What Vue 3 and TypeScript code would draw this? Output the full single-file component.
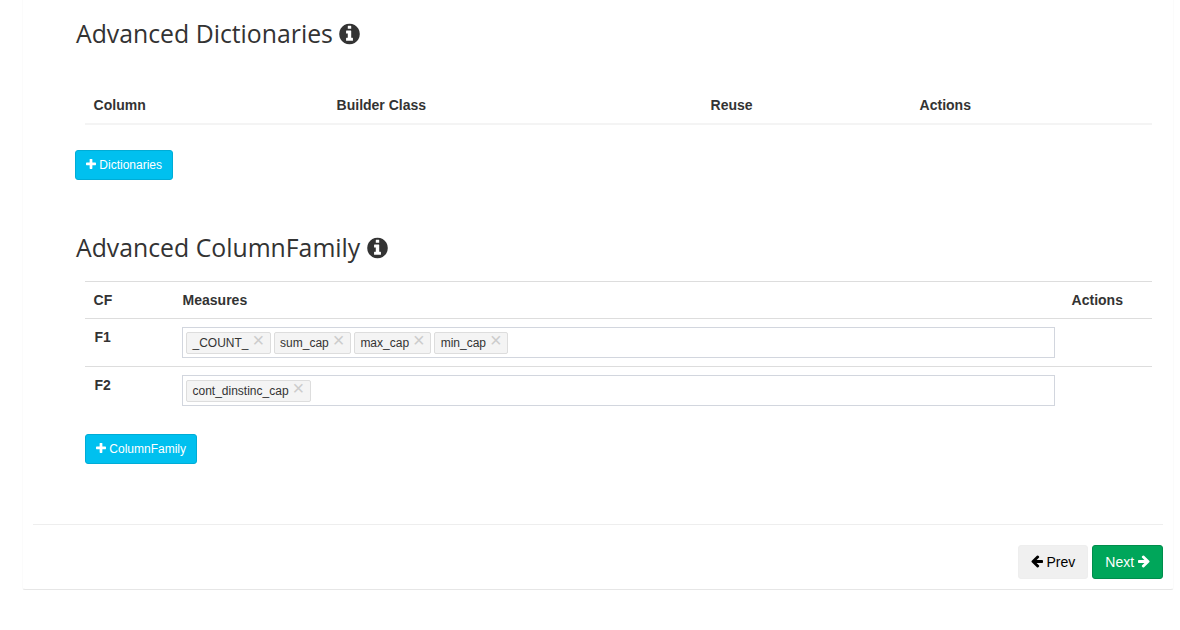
<script setup lang="ts">
interface Row { name: string; tags: string[] }
const rows: Row[] = [
  { name: 'F1', tags: ['_COUNT_', 'sum_cap', 'max_cap', 'min_cap'] },
  { name: 'F2', tags: ['cont_dinstinc_cap'] },
]
const info = 'M1024 1376v-160q0-14-9-23t-23-9h-96v-512q0-14-9-23t-23-9h-320q-14 0-23 9t-9 23v160q0 14 9 23t23 9h96v320h-96q-14 0-23 9t-9 23v160q0 14 9 23t23 9h448q14 0 23-9t9-23zm-128-896v-160q0-14-9-23t-23-9h-192q-14 0-23 9t-9 23v160q0 14 9 23t23 9h192q14 0 23-9t9-23zm640 416q0 209-103 385.5t-279.5 279.5-385.5 103-385.5-103-279.5-279.5-103-385.5 103-385.5 279.5-279.5 385.5-103 385.5 103 279.5 279.5 103 385.5z'
const plus = 'M1408 736v192q0 40-28 68t-68 28h-416v416q0 40-28 68t-68 28h-192q-40 0-68-28t-28-68v-416h-416q-40 0-68-28t-28-68v-192q0-40 28-68t68-28h416v-416q0-40 28-68t68-28h192q40 0 68 28t28 68v416h416q40 0 68 28t28 68z'
const left = 'M1536 768v128q0 53-32.5 90.5t-84.5 37.5h-704l293 294q38 36 38 90t-38 90l-75 76q-37 37-90 37-52 0-91-37l-651-652q-37-37-37-90 0-52 37-91l651-650q38-38 91-38 52 0 90 38l75 74q38 38 38 91t-38 91l-293 293h704q52 0 84.5 37.5t32.5 90.5z'
const right = 'M1472 832q0 54-37 91l-651 651q-39 37-91 37-51 0-90-37l-75-75q-38-38-38-91t38-91l293-293h-704q-52 0-84.5-37.5t-32.5-90.5v-128q0-53 32.5-90.5t84.5-37.5h704l-293-294q-38-36-38-90t38-90l75-75q38-38 90-38 53 0 91 38l651 651q37 35 37 90z'
</script>

<template>
  <div class="page">
    <div class="card">
      <section class="dict">
        <h3 class="title">Advanced Dictionaries
          <svg class="info" viewBox="0 0 1536 1792"><path :d="info" /></svg>
        </h3>
        <table class="t1">
          <thead>
            <tr>
              <th style="width: 243px">Column</th>
              <th style="width: 374px">Builder Class</th>
              <th style="width: 209px">Reuse</th>
              <th>Actions</th>
            </tr>
          </thead>
        </table>
        <button class="btn info-btn sm">
          <svg class="ic" viewBox="0 0 1408 1792"><path :d="plus" /></svg> Dictionaries
        </button>
      </section>

      <section class="family">
        <h3 class="title">Advanced ColumnFamily
          <svg class="info" viewBox="0 0 1536 1792"><path :d="info" /></svg>
        </h3>
        <div class="indent">
          <table class="t2">
            <thead>
              <tr>
                <th style="width: 89px">CF</th>
                <th style="width: 889px">Measures</th>
                <th>Actions</th>
              </tr>
            </thead>
            <tbody>
              <tr v-for="r in rows" :key="r.name">
                <td class="name">{{ r.name }}</td>
                <td>
                  <div class="tagbox">
                    <span v-for="t in r.tags" :key="t" class="tag">{{ t }}<i class="x">×</i></span>
                  </div>
                </td>
                <td></td>
              </tr>
            </tbody>
          </table>
          <button class="btn info-btn sm">
            <svg class="ic" viewBox="0 0 1408 1792"><path :d="plus" /></svg> ColumnFamily
          </button>
        </div>
      </section>

      <footer class="foot">
        <button class="btn prev">
          <svg class="ic" viewBox="0 0 1536 1792"><path :d="left" /></svg> Prev
        </button>
        <button class="btn next">
          Next <svg class="ic" viewBox="0 0 1536 1792"><path :d="right" /></svg>
        </button>
      </footer>
    </div>
  </div>
</template>

<style>
html, body { background: #fff; }
</style>

<style scoped>
.page {
  width: 1152px;
  padding-left: 22px;
  font-family: "Liberation Sans", Arial, sans-serif;
  font-size: 14px;
  color: #333;
}
.card {
  box-sizing: border-box;
  height: 590px;
  padding: 20px 10px 0;
  background: #fff;
  border: 1px solid #fbfbfb;
  border-top: 0;
  border-bottom-color: #e6e6e6;
  border-radius: 0 0 3px 3px;
}
.dict, .family { padding-left: 42px; }
.title {
  margin: 0;
  padding-left: 1px;
  font-family: "Open Sans", sans-serif;
  font-size: 24.8px;
  font-weight: 400;
  line-height: 27px;
  color: #333;
}
.info { width: 21px; height: 24px; fill: #333; vertical-align: -3px; margin-left: 0; }
table { border-collapse: collapse; border-spacing: 0; table-layout: fixed; width: 1067px; margin-left: 10px; }
th { box-sizing: border-box; text-align: left; font-weight: 700; padding: 8px 8px 8px 8.6px; line-height: 20px; }
.t1 { margin-top: 40px; }
.t1 th { border-bottom: 2px solid #f4f4f4; }
.t2 { margin-top: 20px; margin-left: 0; }
.t2 th { border-top: 1px solid #ddd; border-bottom: 1px solid #ddd; }
.t2 td { padding: 8px; border-bottom: 1px solid #ddd; vertical-align: top; line-height: 20px; }
.t2 tbody tr:last-child td { border-bottom: 0; }
.t2 td.name { font-weight: 700; padding-left: 9.5px; }
.indent { padding-left: 10px; }
.tagbox {
  box-sizing: border-box;
  display: flex;
  gap: 3px;
  height: 31px;
  padding: 4px 3px;
  border: 1px solid #d2d6de;
  background: #fff;
}
.tag {
  box-sizing: border-box;
  height: 22px;
  padding: 0 5.4px 0 5.5px;
  display: inline-flex;
  align-items: center;
  background: #f4f4f4;
  border: 1px solid #ddd;
  border-radius: 2px;
  font-size: 12px;
  line-height: 20px;
}
.x {
  font-style: normal;
  font-size: 20px;
  line-height: 16px;
  color: #ccc;
  margin-left: 4px;
  position: relative;
  top: -3px;
}
.btn {
  box-sizing: border-box;
  display: inline-block;
  font-family: inherit;
  border: 1px solid transparent;
  border-radius: 3px;
  cursor: pointer;
}
.ic { width: 12px; height: 14px; fill: currentColor; vertical-align: -2px; }
.sm { height: 30px; font-size: 12px; padding: 0 10px; margin-top: 25px; }
.sm .ic { width: 10px; height: 12.7px; }
.info-btn { background: #00c0ef; border-color: #00acd6; color: #fff; }
.family .sm { margin-top: 20px; }
.dict + .family .title { margin-top: 54px; }
.foot {
  margin-top: 60px;
  border-top: 1px solid #eee;
  padding-top: 20px;
  display: flex;
  justify-content: flex-end;
  gap: 4px;
}
.prev, .next { height: 34px; font-size: 14px; padding: 0 12px; }
.prev { background: #f0f0f0; border-color: #eee; color: #000; }
.next { background: #00a65a; border-color: #008d4c; color: #fff; }
</style>
